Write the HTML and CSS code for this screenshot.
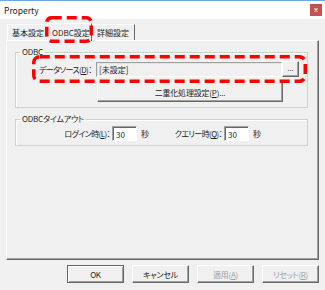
FILE: index.html
```html
<!DOCTYPE html>
<html lang="ja">

<head>
    <meta charset="UTF-8">
    <meta name="viewport" content="width=device-width, initial-scale=1.0">
    <title>Property</title>
    <link rel="stylesheet" href="styles.css">
</head>

<body>
    <div class="dialog">
        <div class="titlebar">
            <span class="title">Property</span>
            <span class="close">
                <svg width="12" height="12" viewBox="0 0 12 12">
                    <path d="M4.5 4.5 L7.5 7.5 M7.5 4.5 L4.5 7.5" stroke="#fff" stroke-width="1.2" />
                </svg>
            </span>
        </div>

        <div class="tabs">
            <div class="tab first">基本設定</div>
            <div class="tab active">ODBC設定</div>
            <div class="tab last">詳細設定</div>
        </div>

        <div class="panel">
            <fieldset class="group group-odbc">
                <legend>ODBC</legend>
                <div class="row row-source">
                    <span class="label">データソース(<u>D</u>)：</span>
                    <div class="field readonly">[未設定]</div>
                    <div class="btn btn-dots">...</div>
                </div>
                <div class="row row-dual">
                    <div class="btn btn-wide">二重化処理設定(<u>P</u>)...</div>
                </div>
            </fieldset>

            <fieldset class="group group-timeout">
                <legend>ODBCタイムアウト</legend>
                <div class="row row-timeout">
                    <span class="label label-login">ログイン時(<u>L</u>)：</span>
                    <div class="field num">30</div>
                    <span class="unit">秒</span>
                    <span class="label label-query">クエリー時(<u>Q</u>)：</span>
                    <div class="field num">30</div>
                    <span class="unit">秒</span>
                </div>
            </fieldset>
        </div>

        <div class="footer">
            <div class="btn btn-foot default">OK</div>
            <div class="btn btn-foot">キャンセル</div>
            <div class="btn btn-foot disabled">適用(<u>A</u>)</div>
            <div class="btn btn-foot disabled">リセット(<u>R</u>)</div>
        </div>
    </div>

    <!-- 注目枠 -->
    <svg class="mark mark-tab" width="48" height="27">
        <rect x="1.75" y="1.75" width="44.5" height="23.5" rx="5" />
    </svg>
    <svg class="mark mark-source" width="275" height="28">
        <rect x="1.75" y="1.75" width="271.5" height="24.5" rx="6" />
    </svg>
</body>

</html>
```

FILE: styles.css
```css
* {
    box-sizing: border-box;
}

body {
    margin: 0;
    position: relative;
    width: 325px;
    height: 290px;
    overflow: hidden;
    background: #f0f0f0;
    font-family: "Noto Sans CJK JP", "Noto Sans", sans-serif;
    font-size: 8px;
    font-feature-settings: "palt";
    color: #1e1e1e;
}

u {
    text-decoration: underline;
    text-underline-offset: 1px;
}

.dialog {
    width: 325px;
    height: 290px;
}

/* タイトルバー */
.titlebar {
    height: 19px;
    background: #fff;
    border-top: 1px solid #6ea7dd;
    display: flex;
    align-items: center;
    padding-left: 4px;
}

.titlebar .title {
    flex: 1;
    font-size: 8.5px;
    color: #222;
}

.titlebar .close {
    width: 12px;
    height: 12px;
    margin-right: 3px;
    background: #c75050;
    display: flex;
}

/* タブ */
.tabs {
    height: 21px;
    display: flex;
    align-items: flex-end;
    padding-left: 7px;
}

.tab {
    flex: none;
    height: 16px;
    line-height: 15px;
    white-space: nowrap;
    background: #f0f0f0;
    border-top: 1px solid #fff;
    border-left: 1px solid #fff;
    border-right: 1px solid #a0a0a0;
}

.tab.first {
    width: 40px;
    padding-left: 4px;
    border-right: none;
}

.tab.active {
    height: 18px;
    width: 45px;
    line-height: 17px;
    padding-left: 4px;
    margin-bottom: -1px;
    position: relative;
    border-right: 1px solid #696969;
}

.tab.last {
    width: 43px;
    padding-left: 5px;
    border-left: none;
    border-right: 1px solid #696969;
}

/* タブパネル */
.panel {
    margin: 0 6px 0 6px;
    height: 220px;
    border-top: 1px solid #fff;
    border-left: 1px solid #fff;
    border-right: 1px solid #696969;
    border-bottom: 1px solid #696969;
    box-shadow: inset -1px -1px 0 #a0a0a0;
    padding-top: 6px;
}

.group {
    margin: 0 10px 0 8px;
    padding: 0;
    min-width: 0;
    border: 1px solid #d0d0d0;
    box-shadow: inset 1px 1px 0 #fff;
}

.group legend {
    margin-left: 4px;
    padding: 0 2px;
    line-height: 10px;
    font-size: 8px;
    letter-spacing: -0.2px;
}

.row {
    display: flex;
    align-items: center;
}

.label {
    white-space: nowrap;
    letter-spacing: -0.6px;
}

.group-odbc {
    padding: 4px 0 5px;
}

.row-source {
    height: 16px;
    padding-left: 23px;
}

.row-source .label {
    width: 57px;
}

.field {
    height: 15px;
    line-height: 13px;
    padding-left: 2px;
    border: 1px solid;
    border-color: #a0a0a0 #fff #fff #a0a0a0;
    white-space: nowrap;
}

.field.readonly {
    width: 186px;
    background: #f0f0f0;
    box-shadow: inset 1px 1px 0 #e3e3e3;
}

.btn {
    display: flex;
    align-items: center;
    justify-content: center;
    background: #f0f0f0;
    border: 1px solid;
    border-color: #fff #696969 #696969 #fff;
    box-shadow: inset -1px -1px 0 #a0a0a0;
    white-space: nowrap;
}

.btn-dots {
    width: 17px;
    height: 16px;
    padding-bottom: 3px;
    font-size: 7px;
}

.row-dual {
    margin-top: 5px;
    padding-left: 81px;
}

.btn-wide {
    width: 186px;
    height: 20px;
    letter-spacing: -0.2px;
}

.group-timeout {
    margin-top: 6px;
    padding: 2px 0 4px;
}

.row-timeout {
    height: 15px;
}

.row-timeout .label {
    text-align: right;
    padding-right: 2px;
}

.label-login {
    width: 96px;
}

.label-query {
    width: 75px;
}

.field.num {
    width: 25px;
    background: #fff;
    box-shadow: inset 1px 1px 0 #696969;
    padding-left: 3px;
    padding-top: 1px;
}

.unit {
    margin-left: 4px;
    width: 8px;
}

/* 下部ボタン */
.footer {
    display: flex;
    justify-content: flex-end;
    gap: 8px;
    padding: 5px 6px 0 0;
}

.btn-foot {
    width: 57px;
    height: 18px;
    letter-spacing: -0.3px;
}

.btn-foot.default {
    border-color: #646464;
    box-shadow: inset 1px 1px 0 #fff, inset -1px -1px 0 #a0a0a0;
}

.btn-foot.disabled {
    color: #a0a0a0;
}

/* 赤い破線 */
.mark {
    position: absolute;
    overflow: visible;
}

.mark rect {
    fill: none;
    stroke: #ff0000;
    stroke-width: 3.5;
    stroke-dasharray: 10 5;
}

.mark-tab {
    left: 45px;
    top: 16px;
}

.mark-source {
    left: 32px;
    top: 55px;
}
```
